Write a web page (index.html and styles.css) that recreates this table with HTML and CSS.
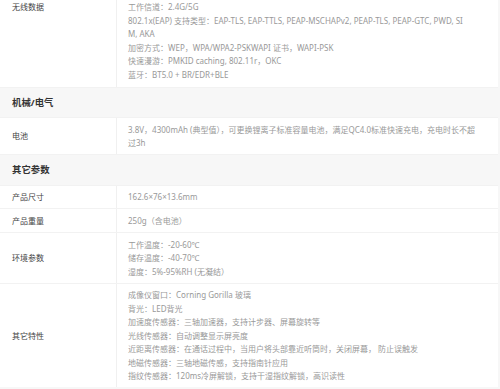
FILE: index.html
```html
<!DOCTYPE html>
<html lang="zh">
<head>
<meta charset="utf-8">
<link rel="stylesheet" href="styles.css">
</head>
<body>
<div class="spec">
  <div class="row">
    <div class="label label-top">无线数据</div>
    <div class="value value-top">
      工作信道：2.4G/5G<br>
      802.1x(EAP) 支持类型：EAP-TLS, EAP-TTLS, PEAP-MSCHAPv2, PEAP-TLS, PEAP-GTC, PWD, SI<br>M, AKA<br>
      加密方式：WEP，WPA/WPA2-PSKWAPI 证书，WAPI-PSK<br>
      快速漫游：PMKID caching, 802.11r，OKC<br>
      蓝牙：BT5.0 + BR/EDR+BLE
    </div>
  </div>
  <div class="section">机械/电气</div>
  <div class="row">
    <div class="label">电池</div>
    <div class="value">3.8V，4300mAh (典型值），可更换锂离子标准容量电池，满足QC4.0标准快速充电，充电时长不超<br>过3h</div>
  </div>
  <div class="section">其它参数</div>
  <div class="row">
    <div class="label">产品尺寸</div>
    <div class="value">162.6×76×13.6mm</div>
  </div>
  <div class="row">
    <div class="label">产品重量</div>
    <div class="value">250g（含电池）</div>
  </div>
  <div class="row">
    <div class="label">环境参数</div>
    <div class="value">工作温度：-20-60℃<br>储存温度：-40-70℃<br>湿度：5%-95%RH (无凝结）</div>
  </div>
  <div class="row">
    <div class="label">其它特性</div>
    <div class="value">成像仪窗口：Corning Gorilla 玻璃<br>背光：LED背光<br>加速度传感器：三轴加速器，支持计步器、屏幕旋转等<br>光线传感器：自动调整显示屏亮度<br>近距离传感器：在通话过程中，当用户将头部靠近听筒时，关闭屏幕， 防止误触发<br>地磁传感器：三轴地磁传感，支持指南针应用<br>指纹传感器：120ms冷屏解锁，支持干湿指纹解锁，高识读性</div>
  </div>
</div>
</body>
</html>
```
FILE: styles.css
```css
html, body {
  margin: 0;
  padding: 0;
  background: #f7f7f7;
}
body {
  font-family: "Noto Sans", "Noto Sans CJK SC", sans-serif;
  font-size: 8px;
  line-height: 13.5px;
}
.spec {
  width: 498px;
  display: flex;
  flex-direction: column;
  gap: 1px;
  background: #f2f2f2;
}
.row {
  display: grid;
  grid-template-columns: 116px 1fr;
  column-gap: 1px;
  background: #f0f0f0;
}
.label {
  background: #fff;
  color: #444;
  padding-left: 12px;
  display: flex;
  align-items: center;
}
.label-top {
  align-items: flex-start;
}
.value {
  background: #fff;
  color: #999;
  padding: 4.6px 0 4.6px 11px;
  white-space: nowrap;
}
.value-top {
  padding-top: 0;
  padding-bottom: 5.5px;
}
.section {
  height: 29.5px;
  background: #f7f7f7;
  display: flex;
  align-items: center;
  padding-left: 12px;
  font-size: 9.4px;
  font-weight: bold;
  color: #333;
}
```
